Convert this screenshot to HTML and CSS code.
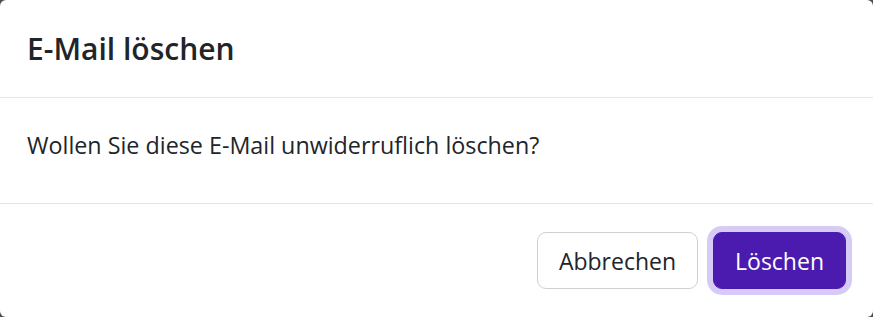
FILE: index.html
```html
<!DOCTYPE html>
<html lang="de">
<head>
    <meta charset="UTF-8">
    <meta name="viewport" content="width=device-width, initial-scale=1.0">
    <title>E-Mail löschen</title>
    <link rel="stylesheet" href="styles.css">
</head>
<body>
    <div class="modal">
        <div class="modal-header">
            <h5 class="modal-title">E-Mail löschen</h5>
        </div>
        <div class="modal-body">
            <p>Wollen Sie diese E-Mail unwiderruflich löschen?</p>
        </div>
        <div class="modal-footer">
            <button class="btn btn-outline">Abbrechen</button>
            <button class="btn btn-primary">Löschen</button>
        </div>
    </div>
</body>
</html>
```

FILE: styles.css
```css
html, body {
    margin: 0;
    height: 100%;
}
body {
    background-color: #4d4d4f;
    font-family: "Open Sans", "Noto Sans", sans-serif;
    color: #212529;
    overflow: hidden;
}
.modal {
    background-color: #fff;
    border-radius: 6px;
    height: 317px;
    display: flex;
    flex-direction: column;
}
.modal-header {
    padding: 24px 27px;
    border-bottom: 1px solid #e5e5e5;
}
.modal-title {
    margin: 0;
    font-size: 30px;
    font-weight: 600;
    line-height: 49px;
}
.modal-body {
    padding: 29px 27px 40px;
    border-bottom: 1px solid #e5e5e5;
}
.modal-body p {
    margin: 0;
    font-size: 23.3px;
    line-height: 36px;
}
.modal-footer {
    display: flex;
    justify-content: flex-end;
    align-items: flex-start;
    gap: 15px;
    padding: 28px 27px 0;
}
.btn {
    font-family: inherit;
    font-size: 23px;
    height: 57px;
    padding: 0 21px;
    border-radius: 9px;
    cursor: pointer;
}
.btn-outline {
    background-color: #fff;
    color: #212529;
    border: 1px solid #d0d0d0;
}
.btn-primary {
    background-color: #4b1bb0;
    color: #fff;
    border: 1px solid #4b1bb0;
    box-shadow: 0 0 0 6px #d6cbf6;
}
```
